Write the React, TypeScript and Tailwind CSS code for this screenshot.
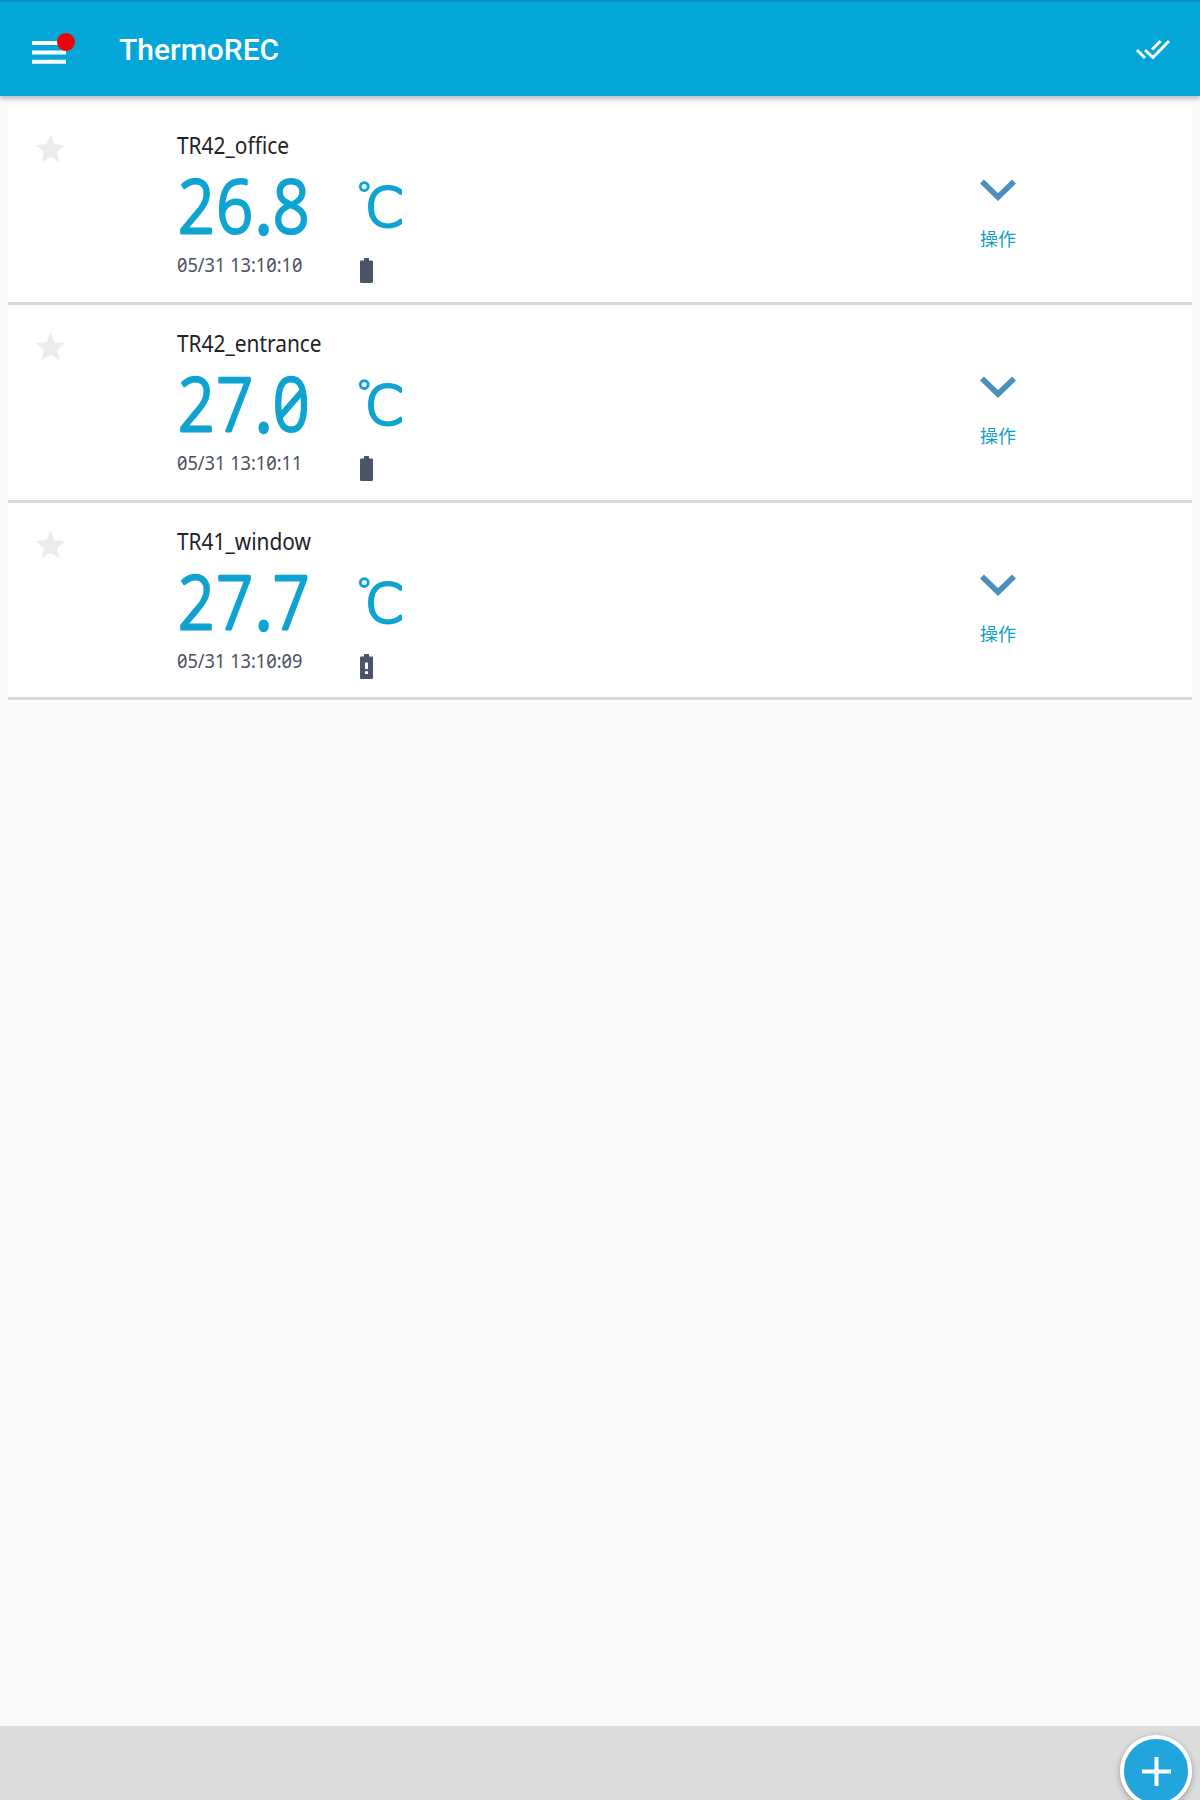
type Sensor = {
  name: string;
  value: string;
  time: string;
  low: boolean;
};

const sensors: Sensor[] = [
  { name: "TR42_office", value: "26.8", time: "05/31 13:10:10", low: false },
  { name: "TR42_entrance", value: "27.0", time: "05/31 13:10:11", low: false },
  { name: "TR41_window", value: "27.7", time: "05/31 13:10:09", low: true },
];

const textFont = "font-['Noto_Sans','Noto_Sans_CJK_JP',sans-serif] [font-feature-settings:'zero'_1]";

function Battery({ low }: { low: boolean }) {
  return (
    <svg className="mt-[5px] ml-[2px] h-[25px] w-[13px]" viewBox="0 0 13 25" fill="#4a5568">
      <path
        fillRule="evenodd"
        d={
          "M4 0h5v2.5h2.8a1.2 1.2 0 0 1 1.2 1.2v20.1a1.2 1.2 0 0 1-1.2 1.2H1.200A1.200 1.200 0 0 1 0 23.800V3.700A1.200 1.200 0 0 1 1.200 2.500H4z" +
          (low ? "M5 8.500h3v6.500H5zM5 17.200h3v2.800H5z" : "")
        }
      />
    </svg>
  );
}

function Row({ sensor }: { sensor: Sensor }) {
  const [whole, fraction] = sensor.value.split(".");
  return (
    <div className="flex h-[197.8px] border-b-[3px] border-[#d8d8d8] bg-white">
      <div className="w-[169px] pt-[27px] pl-[28px]">
        <svg className="size-[29px]" viewBox="2 2 20 19" fill="#ebecee">
          <path d="M12 17.270L18.180 21l-1.640-7.030L22 9.240l-7.190-.61L12 2 9.190 8.630 2 9.240l5.460 4.730L5.820 21z" />
        </svg>
      </div>
      <div className={`w-[181px] pt-[22px] ${textFont}`}>
        <div className="h-[34px] origin-left scale-x-[0.87] text-[24px] leading-[32px] whitespace-nowrap text-[#1f2328]">{sensor.name}</div>
        <svg className="h-[86px] w-[181px] overflow-visible">
          <text
            transform="translate(0.5 69.5) scale(.87 1)"
            className="fill-[#0fa3d1] stroke-[#0fa3d1] stroke-[3px] text-[74px] font-light [stroke-linejoin:round]"
          >
            <tspan x="0.500 44.500">{whole}</tspan>
            <tspan x="90" className="stroke-[5.4px]">.</tspan>
            <tspan x="109.500">{fraction}</tspan>
          </text>
        </svg>
        <div className="h-[32px] origin-left scale-x-[0.91] text-[20px] leading-[32px] whitespace-nowrap text-[#4a5260]">{sensor.time}</div>
      </div>
      <div className="w-[583px] pt-[62px]">
        <svg className="h-[84px] w-[60px] overflow-visible">
          <text
            transform="scale(1.040 1)"
            className="fill-[#0fa3d1] stroke-[#0fa3d1] font-['DejaVu_Sans',sans-serif] font-extralight [stroke-linejoin:round]"
          >
            <tspan x="-2.300" y="38" className="stroke-[1.3px] text-[33px]">°</tspan>
            <tspan x="6.800" y="57.500" className="stroke-[3px] text-[53px]">C</tspan>
          </text>
        </svg>
        <Battery low={sensor.low} />
      </div>
      <div className="flex w-[114px] flex-col items-center pt-[71.5px]">
        <svg className="h-[22px] w-[36px]" viewBox="0 0 36 22" fill="none" stroke="#4a90bd" strokeWidth="5.600">
          <path d="M2 2.500L18 18 34 2.500" />
        </svg>
        <div className="mt-[23px] font-['Noto_Sans_CJK_JP',sans-serif] text-[18px] leading-[28px] text-[#0f9fc0]">操作</div>
      </div>
    </div>
  );
}

export default function App() {
  return (
    <div className="flex h-[1800px] w-[1200px] flex-col overflow-hidden bg-[#fafafa]">
      <header className="z-10 flex h-[96px] shrink-0 items-center border-t-2 border-[#0090c4] bg-[#02a7d7] shadow-[0_3px_4px_rgba(60,80,110,0.32)]">
        <div className="relative ml-[32px] h-[23px] w-[34px]">
          <svg className="mt-[3px] h-[23px] w-[34px]" viewBox="0 0 34 23" fill="#fff">
            <path d="M0 0h34v4H0zM0 9.400h34v4H0zM0 18.800h34v4H0z" />
          </svg>
          <span className="absolute -top-[5px] left-[25px] size-[18px] rounded-full bg-[#f20008]" />
        </div>
        <h1 className="mt-[2px] ml-[53px] font-['Roboto',sans-serif] text-[30px] leading-[40px] font-medium text-white">ThermoREC</h1>
        <svg className="mr-[29px] ml-auto h-[21px] w-[36px]" viewBox="0 0 36 21" fill="none" stroke="#fff" strokeWidth="3">
          <path d="M2 11l8 8M10 11l8 7.500L34 2M17 10.500L25.500 2" />
        </svg>
      </header>
      <main className="mx-[8px] mt-[11px] grow">
        {sensors.map((s) => (
          <Row key={s.name} sensor={s} />
        ))}
      </main>
      <footer className="relative h-[74px] shrink-0 bg-[#dcdcdc]">
        <button className="absolute top-[9px] right-[8px] flex size-[72px] items-center justify-center rounded-full border-[4px] border-white bg-[#22a4dd] shadow-[0_2px_6px_rgba(0,0,0,0.3)]">
          <svg className="size-[29px]" viewBox="0 0 29 29" fill="#fff">
            <path d="M12.500 0h4v12.500H29v4H16.500V29h-4V16.500H0v-4h12.500z" />
          </svg>
        </button>
      </footer>
    </div>
  );
}
